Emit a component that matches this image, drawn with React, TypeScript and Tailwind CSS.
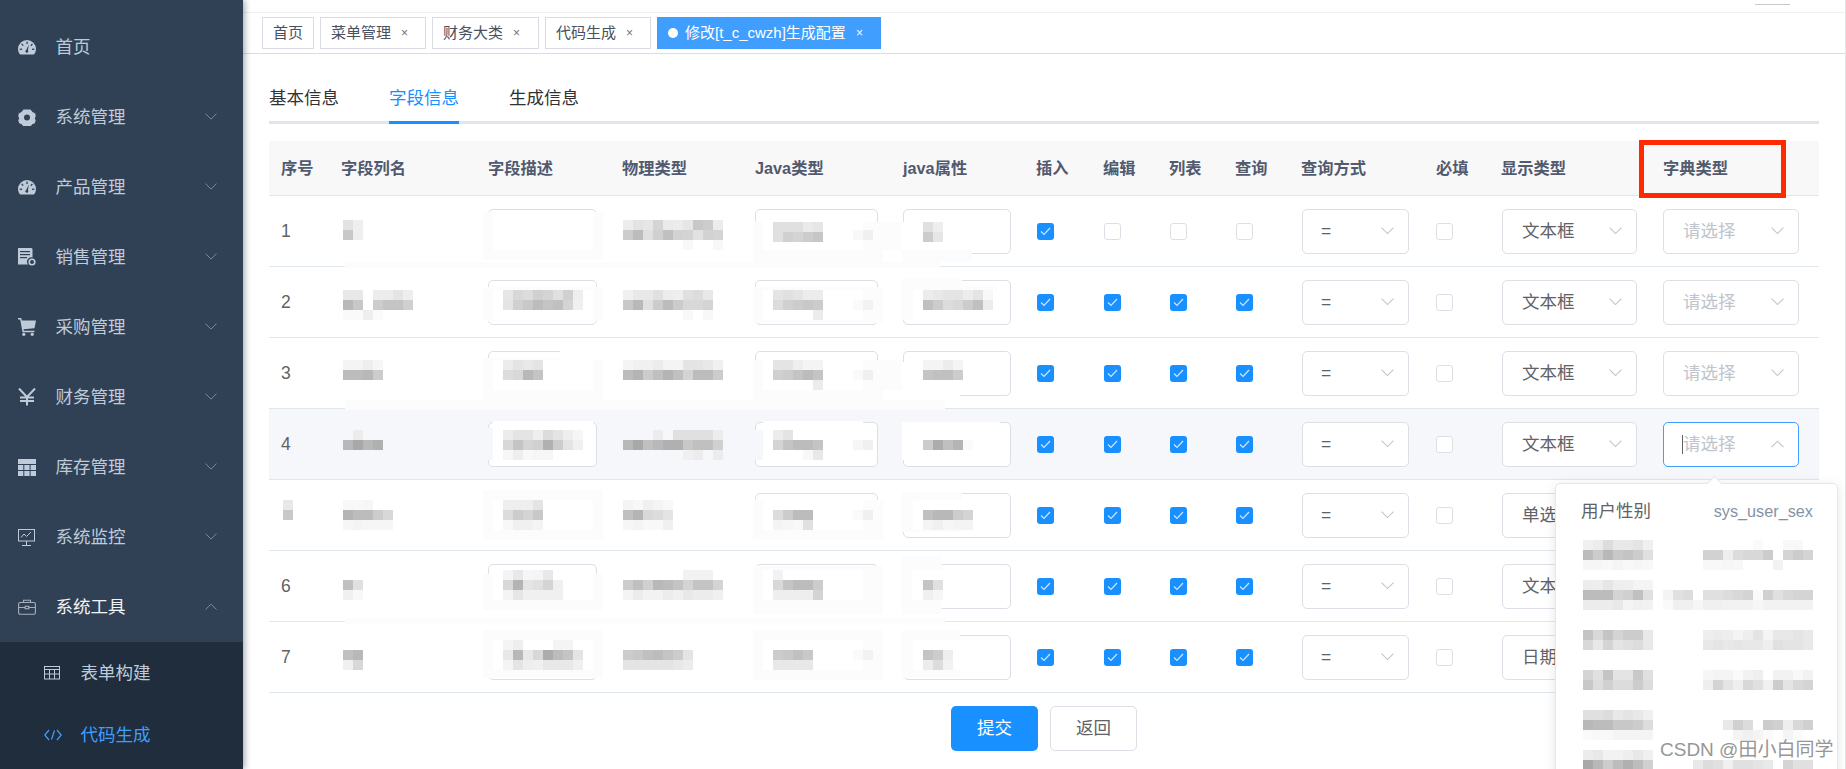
import React from "react";

const columns = "grid-cols-[60px_147px_134px_133px_148px_133px_67px_66px_66px_66px_135px_65px_162px_168px]";

function Gauge() {
  return (
    <svg width="18" height="15" viewBox="0 0 18 15">
      <path d="M2.2 14.6C.8 13.2 0 11.2 0 9a9 9 0 0 1 18 0c0 2.200-.8 4.200-2.200 5.600z" fill="#bfcbd9" />
      <g fill="#304156">
        <rect x="8.400" y="1.600" width="1.300" height="2.400" />
        <rect x="3.800" y="3.600" width="1.300" height="2.400" transform="rotate(-40 4.400 4.800)" />
        <rect x="13" y="3.600" width="1.300" height="2.400" transform="rotate(40 13.600 4.800)" />
        <rect x="1.700" y="8.600" width="2.400" height="1.300" />
        <rect x="14" y="8.600" width="2.400" height="1.300" />
        <path d="M10.900 4.600 9.900 10.200a1.500 1.500 0 1 1-1.700-.3z" />
      </g>
    </svg>
  );
}
function Gear() {
  return (
    <svg width="18" height="17" viewBox="0 0 18 17">
      <path fillRule="evenodd" fill="#bfcbd9" d="M5.500.500h7l2 2.400 2.800 1.500.4 3.100-.9 1.800.9 2.100-.9 2.800-2.500 1-1.800 2.300h-7l-1.800-2.300-2.500-1-.9-2.800.9-2.100-.9-1.800.4-3.100 2.800-1.500zM9 5.500a3 3 0 1 0 0 6 3 3 0 0 0 0-6z" />
    </svg>
  );
}
function Sales() {
  return (
    <svg width="18" height="18" viewBox="0 0 18 18">
      <path d="M0 0h13.500l1 1v8.400a4.500 4.500 0 0 0-4.600 7.100H0z" fill="#bfcbd9" />
      <g fill="#304156">
        <rect x="2" y="3" width="10" height="1.200" />
        <rect x="2" y="6" width="10" height="1.200" />
        <rect x="2" y="9" width="7" height="1.200" />
      </g>
      <circle cx="14" cy="14" r="2.800" fill="none" stroke="#bfcbd9" strokeWidth="1.600" />
    </svg>
  );
}
function Cart() {
  return (
    <svg width="18" height="18" viewBox="0 0 18 18">
      <path d="M0 0h3.200l.7 2.400H18l-1.500 7.800-11 1 .4 1.600h10.500v1.400H4.500L2.200 1.500H0z" fill="#bfcbd9" />
      <circle cx="5.800" cy="16.300" r="1.600" fill="#bfcbd9" />
      <circle cx="14.200" cy="16.300" r="1.600" fill="#bfcbd9" />
    </svg>
  );
}
function Yen() {
  return (
    <svg width="18" height="18" viewBox="0 0 18 18">
      <path d="M1 .500 9 9l8-8.500M9 9v8.500M2 9.500h14M2 13h14" fill="none" stroke="#bfcbd9" strokeWidth="2" />
    </svg>
  );
}
function TableSolid() {
  return (
    <svg width="18" height="17" viewBox="0 0 18 17">
      <rect width="18" height="5" fill="#bfcbd9" />
      <g fill="#bfcbd9">
        <rect y="6" width="5.300" height="5" />
        <rect x="6.300" y="6" width="5.300" height="5" />
        <rect x="12.600" y="6" width="5.400" height="5" />
        <rect y="12" width="5.300" height="5" />
        <rect x="6.300" y="12" width="5.300" height="5" />
        <rect x="12.600" y="12" width="5.400" height="5" />
      </g>
    </svg>
  );
}
function Monitor() {
  return (
    <svg width="18" height="17" viewBox="0 0 18 17" fill="none" stroke="#bfcbd9" strokeWidth="1">
      <rect x=".5" y=".5" width="16" height="11.500" />
      <path d="M3 8.500 6 5l2.500 2.500L13 3M8.500 12v4M4 16.500h9" />
    </svg>
  );
}
function Briefcase() {
  return (
    <svg width="18" height="16" viewBox="0 0 18 16" fill="none" stroke="#a5b0bd" strokeWidth="1.100">
      <rect x=".6" y="3.500" width="16.800" height="11.800" rx="1.500" />
      <path d="M5.500 3.500V1.200h7v2.300M.6 8.500h6.400M11 8.500h6.400" />
      <rect x="7.200" y="7.300" width="3.600" height="2.400" />
    </svg>
  );
}
function SmallTable() {
  return (
    <svg width="16" height="14" viewBox="0 0 16 14" fill="none" stroke="#bfcbd9" strokeWidth="1">
      <rect x=".5" y=".5" width="15" height="12.500" />
      <path d="M.5 3.500h15M.5 8h15M5.500 3.500V13M10.500 3.500V13" />
    </svg>
  );
}
function CodeIcon() {
  return (
    <svg width="18" height="12" viewBox="0 0 18 12" fill="none" stroke="#409eff" strokeWidth="1.200">
      <path d="M5 1 .8 6 5 11M13 1l4.200 5L13 11M10.500 1.500l-3 9" />
    </svg>
  );
}
function Chevron({ up, color = "#c0c4cc", w = 12 }: { up?: boolean; color?: string; w?: number }) {
  return (
    <svg width={w} height={w * 0.6} viewBox="0 0 12 7" fill="none" stroke={color} strokeWidth="1">
      <path d={up ? "M.5 6.500 6 1l5.500 5.500" : "M.5.500 6 6 11.500.5"} />
    </svg>
  );
}

const menu: { label: string; icon: React.ReactNode; arrow?: boolean }[] = [
  { label: "首页", icon: <Gauge /> },
  { label: "系统管理", icon: <Gear />, arrow: true },
  { label: "产品管理", icon: <Gauge />, arrow: true },
  { label: "销售管理", icon: <Sales />, arrow: true },
  { label: "采购管理", icon: <Cart />, arrow: true },
  { label: "财务管理", icon: <Yen />, arrow: true },
  { label: "库存管理", icon: <TableSolid />, arrow: true },
  { label: "系统监控", icon: <Monitor />, arrow: true },
];

function Sidebar() {
  return (
    <aside className="w-[243px] shrink-0 h-full bg-[#304156] pt-[12px] text-[17.5px] text-[#bfcbd9] shadow-[2px_0_6px_rgba(0,21,41,0.35)] z-10 overflow-hidden">
      {menu.map((m) => (
        <div key={m.label} className="h-[70px] flex items-center pl-[18px] pr-[26px]">
          <span className="w-[37.5px] flex items-center">{m.icon}</span>
          <span className="flex-1">{m.label}</span>
          {m.arrow && <Chevron color="#7f8b99" />}
        </div>
      ))}
      <div className="h-[70px] flex items-center pl-[18px] pr-[26px] text-[#f4f4f5]">
        <span className="w-[37.5px] flex items-center"><Briefcase /></span>
        <span className="flex-1">系统工具</span>
        <Chevron up color="#7f8b99" />
      </div>
      <div className="bg-[#1f2d3d] h-[127px]">
        <div className="h-[62px] flex items-center pl-[44px]">
          <span className="w-[36.5px] flex items-center"><SmallTable /></span>
          <span>表单构建</span>
        </div>
        <div className="h-[62px] flex items-center pl-[44px] text-[#409eff]">
          <span className="w-[36.5px] flex items-center"><CodeIcon /></span>
          <span>代码生成</span>
        </div>
      </div>
    </aside>
  );
}

function TagItem({ label, closable = true, w }: { label: string; closable?: boolean; w: string }) {
  return (
    <div className={`h-[32px] ${w} border border-[#d8dce5] bg-white text-[#495060] text-[15px] flex items-center pl-[10px]`}>
      <span>{label}</span>
      {closable && <span className="ml-[10px] text-[12px] text-[#6b7280]">×</span>}
    </div>
  );
}

function Tags() {
  return (
    <div className="h-[42px] border-t border-b border-t-[#f0f0f0] border-b-[#d8dce5] flex items-center gap-[6px] pl-[19px] shrink-0">
      <TagItem label="首页" closable={false} w="w-[52px]" />
      <TagItem label="菜单管理" w="w-[106px]" />
      <TagItem label="财务大类" w="w-[107px]" />
      <TagItem label="代码生成" w="w-[106px]" />
      <div className="h-[32px] w-[224px] bg-[#409eff] text-white text-[15px] flex items-center pl-[11px]">
        <span className="w-[10px] h-[10px] rounded-full bg-white mr-[7px]" />
        <span>修改[t_c_cwzh]生成配置</span>
        <span className="ml-[10px] text-[12px]">×</span>
      </div>
    </div>
  );
}

function InputBox() {
  return <div className="w-full h-[45px] bg-white border border-[#dcdfe6] rounded-[5px]" />;
}

function SelectBox({ text, placeholder, focus, small }: { text?: string; placeholder?: boolean; focus?: boolean; small?: boolean }) {
  return (
    <div
      className={`w-full h-[45px] bg-white border rounded-[5px] flex items-center justify-between pr-[14px] text-[17.5px] ${
        focus ? "border-[#409eff]" : "border-[#dcdfe6]"
      } ${small ? "pl-[18px]" : "pl-[19px]"}`}
    >
      {focus && <span className="absolute ml-[0px] -translate-x-[1px] w-px h-[19px] bg-[#606266]" />}
      <span className={placeholder ? "text-[#c0c4cc]" : "text-[#606266]"}>{text}</span>
      <Chevron up={focus} w={13} />
    </div>
  );
}

function CheckBox({ on }: { on: boolean }) {
  return on ? (
    <span className="w-[17px] h-[17px] rounded-[3px] bg-[#1890ff] flex items-center justify-center">
      <svg width="11" height="9" viewBox="0 0 11 9" fill="none" stroke="#cfe6ff" strokeWidth="1.200">
        <path d="M1 4.500 4 7.500 10 1" />
      </svg>
    </span>
  ) : (
    <span className="w-[17px] h-[17px] rounded-[3px] bg-white border border-[#dcdfe6]" />
  );
}

const rows = [
  { n: "1", checks: [true, false, false, false], type: "文本框" },
  { n: "2", checks: [true, true, true, true], type: "文本框" },
  { n: "3", checks: [true, true, true, true], type: "文本框" },
  { n: "4", checks: [true, true, true, true], type: "文本框", focus: true },
  { n: "", checks: [true, true, true, true], type: "单选框" },
  { n: "6", checks: [true, true, true, true], type: "文本框" },
  { n: "7", checks: [true, true, true, true], type: "日期控件" },
];

const heads = ["序号", "字段列名", "字段描述", "物理类型", "Java类型", "java属性", "插入", "编辑", "列表", "查询", "查询方式", "必填", "显示类型", "字典类型"];

function Table() {
  return (
    <div className="mt-[17px]">
      <div className={`grid ${columns} h-[55px] bg-[#f8f8f9] border-b border-[#dfe6ec] items-center text-[16.25px] font-bold text-[#515a6e]`}>
        {heads.map((h) => (
          <div key={h} className="pl-[12px]">{h}</div>
        ))}
      </div>
      {rows.map((r, i) => (
        <div key={i} className={`grid ${columns} h-[71px] border-b border-[#dfe6ec] items-center ${r.focus ? "bg-[#f5f7fa]" : "bg-white"}`}>
          <div className="pl-[12px] text-[17.5px] text-[#606266]">{r.n}</div>
          <div />
          <div className="pl-[12px] pr-[13px]"><InputBox /></div>
          <div />
          <div className="pl-[12px] pr-[13px]"><InputBox /></div>
          <div className="pl-[12px] pr-[13px]"><InputBox /></div>
          {r.checks.map((c, j) => (
            <div key={j} className="pl-[13px] flex"><CheckBox on={c} /></div>
          ))}
          <div className="pl-[13px] pr-[15px]"><SelectBox text="=" small /></div>
          <div className="pl-[12px] flex"><CheckBox on={false} /></div>
          <div className="pl-[13px] pr-[14px]"><SelectBox text={r.type} /></div>
          <div className="pl-[12px] pr-[20px]"><SelectBox text="请选择" placeholder focus={r.focus} /></div>
        </div>
      ))}
    </div>
  );
}

function Main() {
  return (
    <main className="flex-1 min-w-0 h-full flex flex-col bg-white border-r border-[#e4e6ea]">
      <div className="h-[12px] shrink-0 flex justify-end pr-[55px]">
        <span className="w-[35px] h-px mt-[4px] bg-[#c9c9c9]" />
      </div>
      <Tags />
      <div className="pl-[26px] pr-[26px] flex-1">
        <div className="h-[70px] border-b-[3px] border-[#dfe4ed] flex gap-[50px] text-[17.5px] text-[#303133]">
          <div className="h-[70px] w-[70px] flex items-center justify-center pt-[21px] pb-[3px]">基本信息</div>
          <div className="h-[70px] w-[70px] flex items-center justify-center pt-[21px] text-[#1890ff] border-b-[3px] border-[#1890ff]">字段信息</div>
          <div className="h-[70px] w-[70px] flex items-center justify-center pt-[21px] pb-[3px]">生成信息</div>
        </div>
        <Table />
        <div className="mt-[13px] flex justify-center gap-[12px] text-[17.5px]">
          <button className="w-[87px] h-[45px] rounded-[5px] bg-[#1890ff] text-white">提交</button>
          <button className="w-[87px] h-[45px] rounded-[5px] bg-white border border-[#dcdfe6] text-[#606266]">返回</button>
        </div>
      </div>
    </main>
  );
}

type Patch = [number, number, number, number, string];
const F = "#fcfcfd";
const W = "#ffffff";
const H = "#f5f7fa";
const patches: Patch[] = [
  // row 1
  [345, 262, 595, 6, F],
  [483, 212, 120, 48, F],
  [493, 212, 100, 38, W],
  [753, 222, 130, 46, F],
  [763, 222, 100, 28, W],
  [883, 222, 20, 28, F],
  [902, 222, 94, 28, W],
  [902, 250, 70, 12, F],
  // row 2
  [483, 287, 120, 34, F],
  [493, 290, 100, 30, W],
  [753, 287, 130, 36, F],
  [763, 290, 100, 30, W],
  [902, 278, 60, 8, F],
  [902, 286, 95, 34, F],
  [913, 290, 84, 30, W],
  // row 3
  [345, 400, 600, 10, F],
  [483, 358, 120, 44, F],
  [493, 360, 100, 30, W],
  [560, 349, 46, 11, W],
  [753, 360, 130, 40, F],
  [763, 360, 100, 30, W],
  [883, 360, 20, 30, F],
  [902, 362, 58, 34, W],
  // row 4
  [493, 421, 100, 40, W],
  [483, 428, 10, 32, H],
  [345, 468, 600, 11, H],
  [763, 421, 100, 40, W],
  [753, 430, 10, 30, H],
  [902, 422, 98, 38, W],
  // row 5
  [483, 490, 120, 50, F],
  [493, 500, 100, 30, W],
  [753, 500, 130, 40, F],
  [763, 500, 100, 30, W],
  [902, 492, 60, 40, F],
  [913, 500, 50, 30, W],
  // row 6
  [483, 574, 120, 36, F],
  [493, 570, 100, 30, W],
  [753, 566, 130, 48, F],
  [763, 570, 100, 30, W],
  [902, 556, 40, 58, F],
  [912, 570, 30, 30, W],
  // row 7
  [345, 618, 600, 6, F],
  [483, 630, 120, 48, F],
  [493, 640, 100, 30, W],
  [753, 630, 130, 50, F],
  [763, 640, 100, 30, W],
  [902, 630, 58, 48, F],
  [913, 640, 47, 30, W],
];

type Mos = [number, number, string[]];
const mosaics: Mos[] = [
  // row 1
  [343, 220, ["e2 ee", "c8 ee"]],
  [623, 220, ["ec e3 e6 d4 ea ec e6 c8 cc ec", "cc bc e0 d0 c0 d2 d4 e2 d2 d4", "__ __ __ __ __ __ f8 __ __ f8"]],
  [773, 222, ["e0 e0 e0 ea e6", "e0 d0 d4 cc c6"]],
  [853, 230, ["f8 f0"]],
  [923, 222, ["e0 ee", "cc e6"]],
  // row 2
  [343, 290, ["e8 e8 __ ec ec e4 ee", "b8 c8 __ cc c4 c4 d0", "fa fa ee fa"]],
  [503, 290, ["e6 d8 dc d0 d4 e0 d0 ee", "e4 d0 c8 bc c4 c0 d4 f0"]],
  [623, 290, ["f0 e8 e8 e0 ec ee e0 dc e8", "c8 b8 e0 cc bc cc d8 d8 d4", "__ __ __ __ __ __ f8 __ f8"]],
  [773, 290, ["e4 e0 e4 ec ec", "dc d0 cc c8 cc", "__ __ __ __ ec"]],
  [853, 300, ["fa f2"]],
  [923, 290, ["ec e8 e4 e4 ec e4 f8", "c0 cc dc d8 cc c0 ec"]],
  // row 3
  [343, 360, ["f4 f4 ee f6", "bc bc b8 cc"]],
  [503, 360, ["ec e4 e8 e4", "dc d8 b8 c4"]],
  [623, 360, ["f4 f0 f0 ec f4 f4 e4 e4 e8 f0", "bc b4 cc c0 b4 c0 d4 bc bc cc"]],
  [773, 360, ["e4 e4 ee f4 f4", "d0 cc c4 bc c4", "__ __ __ __ ec"]],
  [853, 370, ["fa f0"]],
  [923, 360, ["f4 f4 ec f4", "c4 c0 c0 cc"]],
  // row 4
  [343, 430, ["__ ec", "b8 a8 b8 b0"]],
  [503, 430, ["ec e4 e4 ee dc e4 ee f6", "d8 c4 d4 d0 b0 cc e4 f0", "f6 ee f8 f6 f6"]],
  [623, 430, ["__ __ __ ec __ e0 e0 e0 e0 ec", "b8 a8 c0 b8 b0 b0 c8 c0 c0 d0", "__ __ __ __ __ __ f0 ec __ ec"]],
  [773, 430, ["ec e4", "d4 c4 bc bc c4", "__ __ __ f8 e8"]],
  [853, 440, ["f6 f0"]],
  [923, 440, ["cc ac c0 b4 fa"]],
  // row 5
  [283, 500, ["e8", "c8"]],
  [343, 500, ["f8 f8 f6", "b4 bc bc cc d8", "f6 f4 f6 f6 f6"]],
  [503, 500, ["ee ee ee e4", "dc cc d4 c8", "f8 f0 f0 f4"]],
  [623, 500, ["f4 f8 f0 f4 f8", "c0 b4 d8 dc e4", "f6 f4 f8 f8 f0"]],
  [773, 510, ["dc cc bc bc", "f4 f6 f8 e0"]],
  [853, 510, ["fa f0"]],
  [923, 510, ["c0 b8 b8 cc d4", "f4 f0 f6 f4 f4"]],
  // row 6
  [343, 580, ["c0 e0", "f0 f8"]],
  [503, 570, ["f4 e8 f6 f4 e8", "d8 b4 e4 e0 d4 f0", "f4 e6 f0 f0 f0 f0"]],
  [623, 570, ["__ __ __ __ __ __ f2 f2 f2", "cc c0 d0 b8 bc c4 d4 c4 c4 d4", "f4 ec f2 f2 ec f0 e8 ec ec f0"]],
  [773, 570, ["f2", "d8 c4 bc bc cc", "ee ee ee ee d4"]],
  [923, 580, ["c4 e0", "f0 f6"]],
  // row 7
  [343, 650, ["c0 b8", "f0 d8"]],
  [503, 640, ["f4 ee __ __ __ f4 f4", "e8 b8 e8 d8 ac bc c4 e4", "f4 e4 ee f0 e8 e8 e8 f0"]],
  [623, 650, ["cc c8 c0 bc c4 cc e4", "e4 e4 e4 e4 e4 e8 ec"]],
  [773, 650, ["cc c8 c0 c8", "e8 e8 e8 e8"]],
  [853, 650, ["fa f2"]],
  [923, 650, ["c4 cc ee", "ec dc f2"]],
];

const dropMosaics: Mos[] = [
  [1583, 540, ["f0 ec dc e8 e8 e4 f0", "bc cc b8 c8 c4 cc e0", "f6 f6 f8 f4 f8 f6 f8"]],
  [1703, 540, ["__ __ __ __ __ fa __ __ f8 f8", "d2 d2 ee dc d8 d8 cc __ d4 cc d4", "f8 f8 f6 f8 __ __ __ f2"]],
  [1583, 580, ["ec ee e6 ee ee f4 f4", "bc bc bc d4 d0 c0 e0", "ec ec ec e8 f4 f0 f2"]],
  [1663, 590, ["f4 e0 dc __ e0 e0 dc d8 d4 fa d0 e0 d8 d4 d4", "fa f0 f0 f6 f0 f0 f2 f2 f2 f6 f2 f2 f2 f2 f2"]],
  [1583, 630, ["c4 d8 c4 d4 cc cc e8", "d8 e8 d4 e4 e0 dc e8"]],
  [1703, 630, ["ee ec ee f4 ee e4 f4 e8 e8 e4 e8", "e8 e4 e8 e6 e8 e8 ee e0 e4 e4 e8"]],
  [1583, 670, ["d4 e0 c4 e4 e4 c8 e0", "c8 dc d0 dc dc cc dc"]],
  [1703, 670, ["f6 f4 f4 fa f2 ee __ f2 f2 f8 f2", "ee d4 e4 ee d8 e0 f0 cc e4 d8 d4"]],
  [1583, 710, ["e0 e0 dc e8 e4 e8 f0", "b8 bc bc c8 c8 cc dc", "fa f8 f8 f4 f4 f4 f4"]],
  [1723, 720, ["e8 d0 dc __ cc d0 ee d8 d0", "__ f4 f0 f4 fa __ f4 fa"]],
  [1583, 750, ["ec e8 f2 f2 ee e8 f0", "a8 b8 cc bc b0 bc d0"]],
  [1693, 760, ["e8 dc e0 f0 e0 e0 e4 e8 __ d4 e0 e0"]],
];

function Mosaic({ m, base }: { m: Mos; base?: [number, number] }) {
  const [x, y, lines] = m;
  const ox = base ? base[0] : 0;
  const oy = base ? base[1] : 0;
  return (
    <div className="absolute flex flex-col" style={{ left: x - ox, top: y - oy }}>
      {lines.map((line, i) => (
        <div key={i} className="flex">
          {line.split(" ").map((v, j) => (
            <span key={j} className="w-[10px] h-[10px]" style={{ backgroundColor: v === "__" ? "transparent" : `#${v}${v}${v}` }} />
          ))}
        </div>
      ))}
    </div>
  );
}

function Dropdown() {
  return (
    <div className="absolute left-[1555px] top-[483px] w-[283px] h-[300px] bg-white border border-[#e4e7ed] rounded-[5px] shadow-[0_2px_12px_rgba(0,0,0,0.1)] z-20">
      <div className="absolute -top-[6px] left-[153px] w-[11px] h-[11px] rotate-45 bg-white border-l border-t border-[#e4e7ed]" />
      <div className="h-[54px] flex items-center justify-between pl-[25px] pr-[24px]">
        <span className="text-[17.5px] text-[#606266]">用户性别</span>
        <span className="text-[16.25px] text-[#8492a6]">sys_user_sex</span>
      </div>
      {dropMosaics.map((m, i) => (
        <Mosaic key={i} m={m} base={[1556, 484]} />
      ))}
    </div>
  );
}

export default function App() {
  return (
    <div className="relative w-[1846px] h-[769px] overflow-hidden flex bg-white font-['Liberation_Sans','Noto_Sans_CJK_SC',sans-serif]">
      <Sidebar />
      <Main />
      {patches.map(([x, y, w, h, c], i) => (
        <div key={i} className="absolute" style={{ left: x, top: y, width: w, height: h, backgroundColor: c }} />
      ))}
      {mosaics.map((m, i) => (
        <Mosaic key={i} m={m} />
      ))}
      <div className="absolute left-[1639px] top-[140px] w-[147px] h-[58px] border-[5px] border-[#ff2a00]" />
      <Dropdown />
      <div className="absolute left-[1660px] top-[738px] z-30 text-[19px] leading-[24px] text-[#969696] [text-shadow:0_0_2px_#ffffff]">CSDN @田小白同学</div>
    </div>
  );
}
